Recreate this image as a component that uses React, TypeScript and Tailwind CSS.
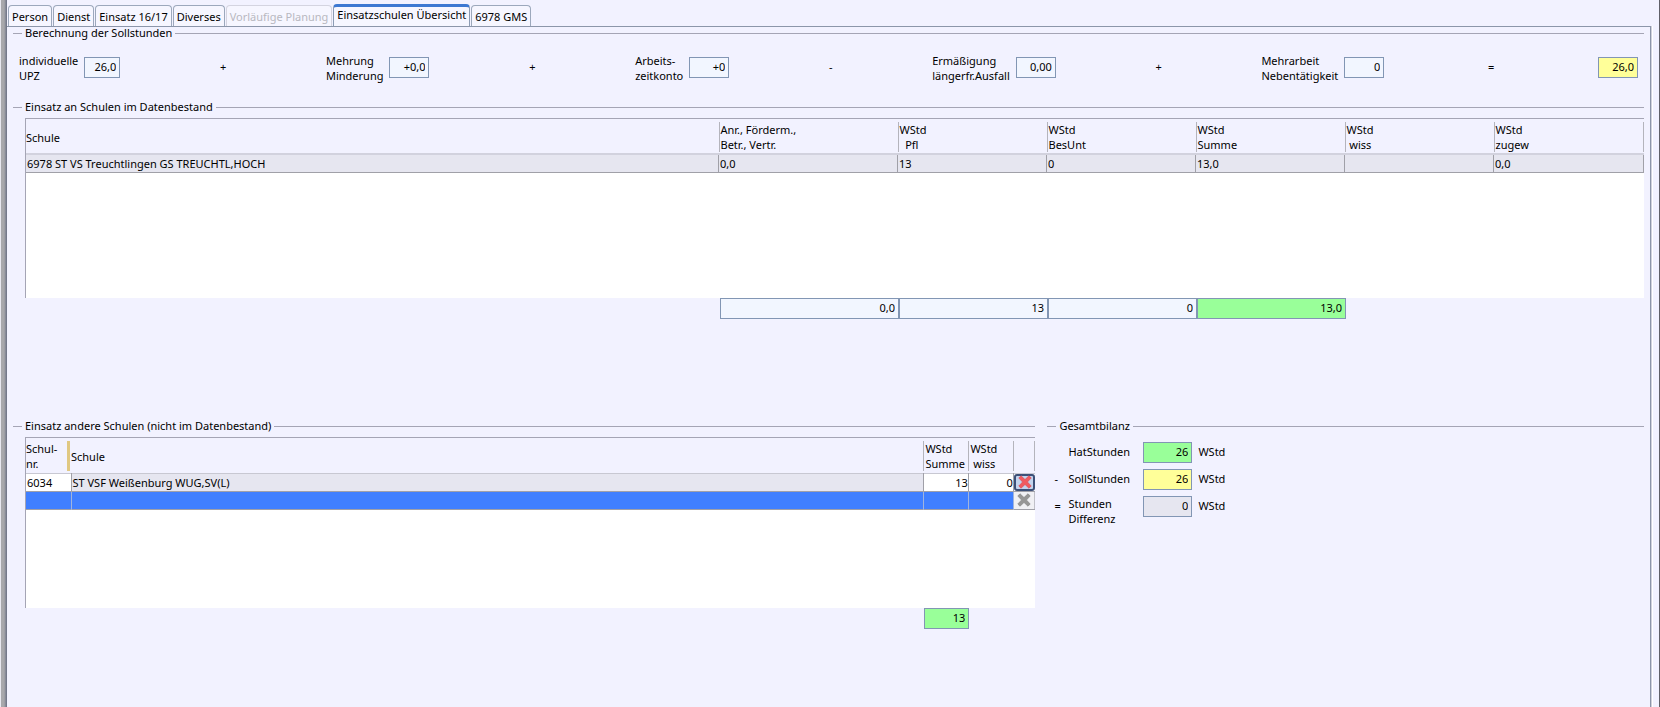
import { useState } from "react";
import type { ReactNode } from "react";
import clsx from "clsx";

const TABS = [
  { label: "Person" },
  { label: "Dienst" },
  { label: "Einsatz 16/17" },
  { label: "Diverses" },
  { label: "Vorläufige Planung", disabled: true },
  { label: "Einsatzschulen Übersicht" },
  { label: "6978 GMS" },
];

const SOLL_FIELDS = [
  { id: "upz", lines: ["individuelle", "UPZ"], value: "26,0", width: "w-9", op: "+" },
  { id: "mehrung", lines: ["Mehrung", "Minderung"], value: "+0,0", width: "w-10", op: "+" },
  { id: "konto", lines: ["Arbeits-", "zeitkonto"], value: "+0", width: "w-10", op: "-" },
  { id: "ermaessigung", lines: ["Ermäßigung", "längerfr.Ausfall"], value: "0,00", width: "w-10", op: "+" },
  { id: "mehrarbeit", lines: ["Mehrarbeit", "Nebentätigkeit"], value: "0", width: "w-10", op: "=" },
];

const HOUR_COLUMNS = [
  { lines: ["Anr., Förderm.,", "Betr., Vertr."], value: "0,0" },
  { lines: ["WStd", "  Pfl"], value: "13" },
  { lines: ["WStd", "BesUnt"], value: "0" },
  { lines: ["WStd", "Summe"], value: "13,0" },
  { lines: ["WStd", " wiss"], value: "" },
  { lines: ["WStd", "zugew"], value: "0,0" },
];

const BILANZ = [
  { id: "hat", op: "", lines: ["HatStunden"], value: "26", color: "bg-[#99ff99]" },
  { id: "soll", op: "-", lines: ["SollStunden"], value: "26", color: "bg-[#ffff99]" },
  { id: "diff", op: "=", lines: ["Stunden", "Differenz"], value: "0", color: "bg-[#e6e6f0]" },
];

const Group = ({ title, className, children }: { title: string; className?: string; children: ReactNode }) => (
  <section className={className}>
    <div className="flex h-4 items-center gap-[3px]">
      <span className="h-px w-[9px] bg-[#a5a5b5]" />
      <h2 className="leading-4">{title}</h2>
      <span className="h-px flex-1 bg-[#a5a5b5]" />
    </div>
    {children}
  </section>
);

const NumberField = ({ id, label, value, className }: { id?: string; label?: string; value: string; className?: string }) => (
  <input
    id={id}
    aria-label={label}
    readOnly
    defaultValue={value}
    className={clsx("h-[21px] min-w-0 border border-[#8296b4] px-[3px] pb-0.5 text-right outline-none", className)}
  />
);

const Lines = ({ lines }: { lines: string[] }) => (
  <>
    {lines.map((line) => (
      <span key={line} className="block whitespace-pre">
        {line}
      </span>
    ))}
  </>
);

const HeadCell = ({ lines, first, last }: { lines: string[]; first?: boolean; last?: boolean }) => (
  <th scope="col" className="p-0 pt-0.5 text-left font-normal">
    <div
      className={clsx(
        "flex h-[30px] flex-col justify-center",
        !first && "border-l border-[#b4b4bc] pl-px",
        last && "border-r"
      )}
    >
      <Lines lines={lines} />
    </div>
  </th>
);

const CrossIcon = ({ color, edge }: { color: string; edge: string }) => (
  <svg viewBox="0 0 16 16" className="h-4 w-4" aria-hidden="true">
    <path
      d="M4 1.8 8 5.6 12 1.8 14.2 4 10.4 8 14.2 12 12 14.2 8 10.4 4 14.2 1.8 12 5.6 8 1.8 4Z"
      fill={color}
      stroke={edge}
      strokeWidth="0.8"
      strokeLinejoin="round"
    />
  </svg>
);

const App = () => {
  const [active, setActive] = useState("Einsatzschulen Übersicht");

  return (
    <div className="flex min-h-screen bg-[#f2f2ff] font-['Noto_Sans','Open_Sans',sans-serif] text-[11px] leading-[15px] text-black">
      {/* Window edge */}
      <div className="w-[7px] shrink-0 border-l border-[#e8e8f0] bg-linear-to-r from-[#a8a8ac] from-50% to-[#6a7084]" />

      <div className="flex min-w-0 flex-1 flex-col border-r border-[#606068] pr-2 pt-1">
        <div role="tablist" className="flex h-[22px] items-end gap-px pl-px">
          {TABS.map((tab) => {
            const selected = tab.label === active;
            return (
              <button
                key={tab.label}
                role="tab"
                aria-selected={selected}
                disabled={tab.disabled}
                onClick={() => setActive(tab.label)}
                className={clsx(
                  "rounded-t-sm border border-b-0 px-[3px] whitespace-nowrap",
                  selected
                    ? "h-[22px] border-[#8c9cb4] border-t-[3px] border-t-[#3c78d2] bg-[#f6f6ff] pb-1"
                    : "h-[21px] border-[#9ca8bc] bg-[#f6f6ff] pt-px",
                  tab.disabled && "border-[#d4d4e0] text-[#b8b8c0]"
                )}
              >
                {tab.label}
              </button>
            );
          })}
        </div>

        <main className="flex-1 border-t border-r border-[#8c96aa] px-[6px] shadow-[1px_0_0_#d0d0dc,2px_0_0_#ffffff]">
          <Group title="Berechnung der Sollstunden" className="-mt-0.5 h-[74px]">
            <div className="mt-3 flex h-[30px] items-start px-[6px]">
              {SOLL_FIELDS.map((field) => (
                <div key={field.id} className="flex flex-auto items-start">
                  <label htmlFor={field.id}>
                    <Lines lines={field.lines} />
                  </label>
                  <NumberField id={field.id} value={field.value} className={clsx("mt-1 ml-[6px] bg-[#f2f6ff]", field.width)} />
                  <span className={clsx("mt-1 flex-1 text-center leading-5", field.op === "=" && "px-1")}>{field.op}</span>
                </div>
              ))}
              <NumberField label="Sollstunden" value="26,0" className="mt-1 w-10 bg-[#ffff99]" />
            </div>
          </Group>

          <Group title="Einsatz an Schulen im Datenbestand" className="h-[319px]">
            <div className="mt-[3px] ml-3 h-[180px] border-t border-l border-[#a5a5b5] bg-white">
              <table className="w-full table-fixed border-collapse">
                <colgroup>
                  <col />
                  <col className="w-[179px]" />
                  <col className="w-[149px]" />
                  <col className="w-[149px]" />
                  <col className="w-[149px]" />
                  <col className="w-[149px]" />
                  <col className="w-[150px]" />
                </colgroup>
                <thead>
                  <tr className="h-[35px] border-b-2 border-[#d2d2de] bg-[#f2f2ff]">
                    <HeadCell first lines={["Schule"]} />
                    {HOUR_COLUMNS.map((col, i) => (
                      <HeadCell key={i} lines={col.lines} last={i === HOUR_COLUMNS.length - 1} />
                    ))}
                  </tr>
                </thead>
                <tbody>
                  <tr className="h-[18px] border-b border-[#a0a0a8] bg-[#e6e6f0]">
                    <td className="p-0 pl-px">6978 ST VS Treuchtlingen GS TREUCHTL,HOCH</td>
                    {HOUR_COLUMNS.map((col, i) => (
                      <td key={i} className="border-x border-[#a0a0a8] p-0 pl-px">
                        {col.value}
                      </td>
                    ))}
                  </tr>
                </tbody>
              </table>
            </div>
            <div className="flex justify-end pr-[298px]">
              <NumberField label="Summe Anrechnungen" value="0,0" className="w-[179px] bg-[#f2f6ff]" />
              <NumberField label="Summe Pflicht" value="13" className="w-[149px] bg-[#f2f6ff]" />
              <NumberField label="Summe BesUnt" value="0" className="w-[149px] bg-[#f2f6ff]" />
              <NumberField label="Summe WStd" value="13,0" className="w-[149px] bg-[#99ff99]" />
            </div>
          </Group>

          <div className="flex gap-3">
            <Group title="Einsatz andere Schulen (nicht im Datenbestand)" className="min-w-0 flex-[1023]">
              <div className="mt-[3px] ml-3 h-[171px] border-t border-l border-[#a5a5b5] bg-white">
                <table className="w-full table-fixed border-collapse">
                  <colgroup>
                    <col className="w-[45px]" />
                    <col />
                    <col className="w-[45px]" />
                    <col className="w-[45px]" />
                    <col className="w-[22px]" />
                  </colgroup>
                  <thead>
                    <tr className="h-[35px] border-b border-[#c8c8d2] bg-[#f2f2ff]">
                      <th scope="col" className="p-0 pt-0.5 text-left font-normal">
                        <div className="mr-px h-[30px] border-r-[3px] border-[#e0c882]">
                          <Lines lines={["Schul-", "nr."]} />
                        </div>
                      </th>
                      <HeadCell first lines={["Schule"]} />
                      <HeadCell lines={["WStd", "Summe"]} />
                      <HeadCell lines={["WStd", " wiss"]} />
                      <HeadCell lines={[]} last />
                    </tr>
                  </thead>
                  <tbody>
                    <tr className="h-[18px] border-b border-[#a0a0a8]">
                      <td className="p-0 pl-px">6034</td>
                      <td className="border-x border-[#a0a0a8] bg-[#e6e6f0] p-0 pl-px">ST VSF Weißenburg WUG,SV(L)</td>
                      <td className="border-x border-[#a0a0a8] p-0 text-right">13</td>
                      <td className="border-x border-[#a0a0a8] p-0 text-right">0</td>
                      <td className="p-0">
                        <button
                          aria-label="Zeile löschen"
                          className="flex h-[17px] w-full items-center justify-center rounded-[3px] border-2 border-[#3c5078] bg-[#c3d4ee]"
                        >
                          <CrossIcon color="#f05a5f" edge="#e0525a" />
                        </button>
                      </td>
                    </tr>
                    <tr className="h-[18px] border-b border-[#a0a0a8] bg-[#407fff]">
                      <td className="p-0" />
                      <td className="border-x border-[#a0b4dc] p-0" />
                      <td className="border-x border-[#a0b4dc] p-0" />
                      <td className="border-x border-[#a0b4dc] p-0" />
                      <td className="bg-[#f0f0f4] p-0">
                        <button
                          aria-label="Leere Zeile löschen"
                          disabled
                          className="flex h-[17px] w-full items-center justify-center border-r border-[#c0c0c8]"
                        >
                          <CrossIcon color="#969696" edge="#8c8c8c" />
                        </button>
                      </td>
                    </tr>
                  </tbody>
                </table>
              </div>
              <div className="flex justify-end pr-[66px]">
                <NumberField label="Summe andere Schulen" value="13" className="w-[45px] bg-[#99ff99]" />
              </div>
            </Group>

            <Group title="Gesamtbilanz" className="min-w-0 flex-[597]">
              <div className="mt-2 flex flex-col gap-[6px] pl-[7px]">
                {BILANZ.map((row) => (
                  <div key={row.id} className="flex items-start leading-5">
                    <span className="w-[14px]">{row.op}</span>
                    <label htmlFor={row.id} className={clsx("w-[75px]", row.lines.length > 1 && "leading-[15px]")}>
                      <Lines lines={row.lines} />
                    </label>
                    <NumberField id={row.id} value={row.value} className={clsx("w-[49px]", row.color)} />
                    <span className="pl-[6px]">WStd</span>
                  </div>
                ))}
              </div>
            </Group>
          </div>
        </main>
      </div>
    </div>
  );
};

export default App;
